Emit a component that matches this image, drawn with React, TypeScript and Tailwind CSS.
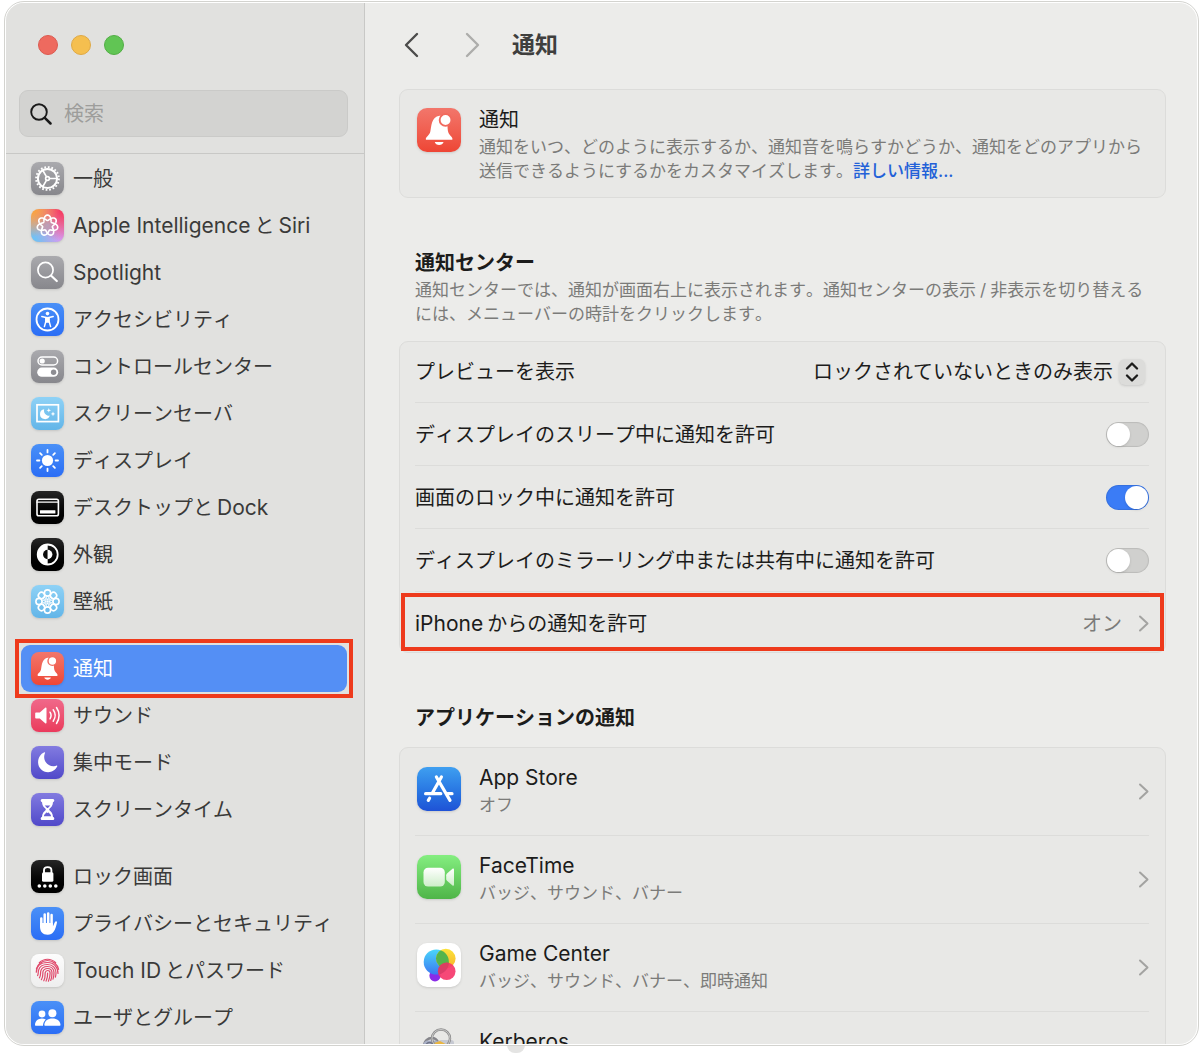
import React, { useState } from 'react';
import clsx from 'clsx';

interface SidebarItem {
  id: string;
  label: string;
  tile: string;
  glyph: React.ReactNode;
}

interface AppEntry {
  name: string;
  detail?: string;
  icon: React.ReactNode;
}

const GRAY = 'bg-linear-to-b from-[#aaaaae] to-[#87878c]';
const BLUE = 'bg-linear-to-b from-[#4a90f7] to-[#2b6df5]';
const SKY = 'bg-linear-to-b from-[#8fd2f6] to-[#62b5e8]';
const BLACK = 'bg-linear-to-b from-[#262626] to-[#000000]';
const RED = 'bg-linear-to-b from-[#f2766b] to-[#ee4534]';
const PINK = 'bg-linear-to-b from-[#f0688a] to-[#ea3a5c]';
const PURPLE = 'bg-linear-to-b from-[#837be0] to-[#5148c9]';
const WHITE = 'bg-linear-to-b from-[#fdfdfd] to-[#eeeeee]';
const SIRI =
  'bg-[radial-gradient(circle_at_50%_50%,#b9a0b8_0%,transparent_40%),radial-gradient(circle_at_0%_0%,#ffa52e_0%,transparent_60%),radial-gradient(circle_at_100%_0%,#fb2f55_0%,transparent_70%),radial-gradient(circle_at_0%_100%,#5cc8ff_0%,transparent_65%),radial-gradient(circle_at_100%_100%,#d59bff_0%,transparent_70%)] bg-[#d79fc0]';

// Seven-lobed interlaced loop
const knotPath = (() => {
  const points: string[] = [];
  for (let i = 0; i <= 280; i++) {
    const t = (i / 280) * Math.PI * 4;
    const r = 7.7 + 2.7 * Math.cos(3.5 * t);
    points.push(`${(16.5 + r * Math.sin(t)).toFixed(2)} ${(16.5 - r * Math.cos(t)).toFixed(2)}`);
  }
  return `M${points.join('L')}Z`;
})();

// Latin runs are set a step larger than the kana and kanji beside them
const Mixed: React.FC<{ text: string }> = ({ text }) => {
  const runs = text.split(/([A-Za-z][A-Za-z ]*)/).filter(Boolean);
  return (
    <span>
      {runs.map((run, i) =>
        /^[A-Za-z]/.test(run) ? (
          <span key={i} className={clsx('text-[21px] [font-kerning:normal]', i > 0 && 'ml-1', i < runs.length - 1 && 'mr-1')}>
            {run}
          </span>
        ) : (
          run
        )
      )}
    </span>
  );
};

const Glyph: React.FC<{ children: React.ReactNode }> = ({ children }) => (
  <svg
    viewBox="0 0 33 33"
    className="w-full h-full"
    fill="none"
    stroke="white"
    strokeWidth="1.8"
    strokeLinecap="round"
    strokeLinejoin="round"
    aria-hidden="true"
  >
    {children}
  </svg>
);

const GearGlyph = () => (
  <Glyph>
    <circle cx="16.5" cy="16.5" r="11.4" strokeWidth="1.9" strokeDasharray="1.79 1.79" strokeLinecap="butt" />
    <circle cx="16.5" cy="16.5" r="9.6" strokeWidth="2" />
    <circle cx="16.5" cy="16.5" r="1.9" strokeWidth="1.6" />
    <path d="M18.6 16.5H26M15.4 14.7L11.8 8.3M15.4 18.3L11.8 24.7" strokeWidth="1.7" />
  </Glyph>
);

const SearchGlyph = () => (
  <Glyph>
    <circle cx="14.5" cy="14" r="7.6" strokeWidth="1.7" />
    <path d="M20.2 19.8L25.8 25" strokeWidth="2.2" />
  </Glyph>
);

const AccessibilityGlyph = () => (
  <Glyph>
    <circle cx="16.5" cy="16.5" r="11" />
    <circle cx="16.5" cy="10.6" r="1.8" fill="white" stroke="none" />
    <path d="M10.8 13.6L15 14.6V18L13.4 23.6M22.2 13.6L18 14.6V18L19.6 23.6" strokeWidth="1.5" />
    <path d="M15 14.4h3v4.8h-3z" fill="white" strokeWidth="1" />
  </Glyph>
);

const ControlCenterGlyph = () => (
  <Glyph>
    <rect x="7" y="7" width="19.6" height="8" rx="4" strokeWidth="1.5" />
    <circle cx="11.2" cy="11" r="2.6" fill="white" stroke="none" />
    <rect x="6.2" y="17.6" width="21" height="9.2" rx="4.6" fill="white" stroke="none" />
    <circle cx="22.6" cy="22.2" r="2.7" fill="#8e8e93" stroke="none" />
  </Glyph>
);

const ScreenSaverGlyph = () => (
  <Glyph>
    <rect x="6" y="7.8" width="21.4" height="16.8" strokeWidth="1.7" strokeLinejoin="miter" />
    <path d="M13.2 12.2a5 5 0 1 0 5.6 6.4a5 5 0 0 1-5.6-6.4z" fill="white" stroke="none" />
    <path d="M17.8 11l.6 1.7 1.7.6-1.7.6-.6 1.7-.6-1.7-1.7-.6 1.7-.6zM22 14.6l.7 1.6 1.6.7-1.6.7-.7 1.6-.7-1.6-1.6-.7 1.6-.7z" fill="white" stroke="none" />
  </Glyph>
);

const DisplayGlyph = () => (
  <Glyph>
    <circle cx="16.5" cy="16.5" r="5.6" fill="white" stroke="none" />
    <path d="M16.5 6v2.4M16.5 24.6V27M6 16.5h2.4M24.6 16.5H27M9.1 9.1l1.7 1.7M22.2 22.2l1.7 1.7M9.1 23.9l1.7-1.7M22.2 10.8l1.7-1.7" />
  </Glyph>
);

const DockGlyph = () => (
  <Glyph>
    <rect x="6" y="8.2" width="21.4" height="16.6" rx="1.8" strokeWidth="1.6" />
    <path d="M6 11.2h21.4" strokeWidth="1.2" />
    <rect x="9" y="19.2" width="15.4" height="3.4" rx="0.4" fill="white" stroke="none" />
  </Glyph>
);

const AppearanceGlyph = () => (
  <Glyph>
    <circle cx="16.7" cy="16.5" r="10" strokeWidth="1.8" />
    <path d="M16.7 6.5a10 10 0 0 0 0 20z" fill="white" stroke="none" />
    <path d="M16.7 11.8a4.7 4.7 0 0 0 0 9.4z" fill="#0b0b0b" stroke="none" />
    <path d="M16.7 11.8a4.7 4.7 0 0 1 0 9.4z" fill="white" stroke="none" />
  </Glyph>
);

const WallpaperGlyph = () => (
  <Glyph>
    {[0, 45, 90, 135, 180, 225, 270, 315].map((angle) => (
      <g key={angle} transform={`rotate(${angle} 16.5 16.5)`}>
        <circle cx="16.5" cy="8" r="3.1" strokeWidth="1.6" />
        <path d="M16.5 14.4c-1.6-1-1.6-2.4 0-3.3c1.6 .9 1.6 2.3 0 3.3z" strokeWidth="0.9" />
      </g>
    ))}
    <circle cx="16.5" cy="16.5" r="1.2" fill="white" stroke="none" />
  </Glyph>
);

const BellGlyph = () => (
  <Glyph>
    <path
      d="M6.6 23.2c0-1.7 2.7-2.6 3.4-5.6c.8-3.6.6-10.9 6.9-11.8c2.2-.2 4 .8 5.2 3.2c1.2 2.5 .6 5.8 1.1 8.3c.6 3.2 3.4 4.1 3.4 5.9c0 .4-.2 .7-.8 .7H7.4c-.6 0-.8-.3-.8-.7z"
      fill="white"
      stroke="none"
    />
    <path d="M13.3 25.5h6.600c-.4 1.400-1.700 2.200-3.300 2.200s-2.900-.8-3.300-2.200z" fill="white" stroke="none" />
    <circle cx="21.4" cy="9" r="4.4" fill="white" stroke="#f16a5e" strokeWidth="1.4" />
  </Glyph>
);

const SoundGlyph = () => (
  <Glyph>
    <path d="M5 13.4h3.800l5.400-4.700c.6-.5 1.300-.2 1.300 .6v14.400c0 .8-.7 1.100-1.300 .6l-5.400-4.700H5c-.5 0-.8-.3-.8-.8v-4.600c0-.5 .3-.8 .8-.8z" fill="white" stroke="none" />
    <path d="M19 13.2c1.3 2 1.3 4.6 0 6.6M22.2 10.8c2.4 3.4 2.4 8 0 11.4M25.5 8.500c3.400 4.800 3.400 11.200 0 16" strokeWidth="1.5" />
  </Glyph>
);

const MoonGlyph = () => (
  <Glyph>
    <path d="M13.4 6.3c.5-.2 .9 .2 .6 .8c-2.900 6.400 2 13.400 8.900 13.100c1.100 0 1.900-.3 2.700-.6c.5-.2 .9 .2 .7 .7c-1.700 3.700-5.200 5.900-9.200 5.900c-5.600 0-10-4.300-10-9.900c0-4.500 2.400-8.400 6.300-10z" fill="white" stroke="none" />
  </Glyph>
);

const HourglassGlyph = () => (
  <Glyph>
    <path
      d="M11.400 6h10.200c1 0 1.700.7 1.700 1.600s-.7 1.500-1.300 1.500c0 3.600-1.900 5.300-3.300 6.500c-.7.6-.7 1.200 0 1.800c1.400 1.200 3.300 2.900 3.300 6.500c.6 0 1.300.6 1.300 1.500s-.7 1.600-1.700 1.600H11.400c-1 0-1.700-.7-1.700-1.600s.7-1.500 1.300-1.500c0-3.600 1.900-5.300 3.300-6.500c.7-.6.7-1.200 0-1.800c-1.400-1.200-3.300-2.900-3.300-6.500c-.6 0-1.300-.6-1.300-1.500S10.400 6 11.400 6z"
      fill="white"
      stroke="none"
    />
    <path d="M13.700 12.600h5.600l-2.800 3zM16.500 17.600c0 2.500-3.400 3-3.600 5.600h7.200c-.2-2.600-3.600-3.100-3.600-5.600z" fill="#6a62d4" stroke="none" />
    <path d="M16.500 15.500v4" strokeWidth="1" />
  </Glyph>
);

const LockGlyph = () => (
  <Glyph>
    <path d="M13 13v-2.700c0-4.300 7.400-4.300 7.400 0V13" strokeWidth="1.9" />
    <rect x="11" y="12.3" width="11.4" height="9.4" rx="1.5" fill="white" stroke="none" />
    {[8.3, 13.8, 19.3, 24.8].map((cx) => (
      <circle key={cx} cx={cx} cy="26" r="1.8" fill="white" stroke="none" />
    ))}
  </Glyph>
);

const HandGlyph = () => (
  <Glyph>
    <path d="M10.3 11.6v8M13.700 7.400v10M17.200 6.400v10M20.600 8v10" strokeWidth="2.5" />
    <path d="M9.050 16h12.800v3.300c1-1.500 1.400-3.200 2.100-4.400c.8-1.300 2.400-.6 2 .8c-.8 3.200-1.500 6.400-3.200 8.900c-1.500 2.200-3.400 3.200-6 3.200c-5.100 0-7.700-3.100-7.700-8z" fill="white" stroke="none" />
  </Glyph>
);

const FingerprintGlyph = () => (
  <Glyph>
    <g stroke="#e0486a" strokeWidth="1.2">
      <path d="M8.300 8.700c4.800-4.600 11.600-4.600 16.400 0" />
      <path d="M5.400 14.800c1-3.600 4.900-8.300 11.100-8.300c6 0 10.200 4.500 11.100 8.800" />
      <path d="M5.300 18.200c.2-5.800 4-9.700 11.200-9.700c6.300 0 10.600 4.600 10.500 11" />
      <path d="M6.600 21.600c1-1.800.4-3.200.9-5.200c.9-3.600 4.200-5.900 8.900-5.900c5.300 0 8.600 3.700 8.600 8.300c0 1.500-.2 2.800-.6 4.300" />
      <path d="M8.400 23.800c1.800-2.700.8-4.600 1.400-6.900c.7-2.800 3.300-4.400 6.600-4.400c4 0 6.600 2.700 6.600 6.300c0 2.300-.3 4.300-1 6.300" />
      <path d="M10.400 25.700c2.100-3.600 1.100-5.800 1.600-8c.5-2 2.300-3.200 4.500-3.200c2.700 0 4.500 1.900 4.500 4.400c0 2.800-.4 5.200-1.300 7.600" />
      <path d="M12.800 26.800c2-4 1-6.200 1.400-8.200c.3-1.300 1.100-2.100 2.400-2.100c1.500 0 2.500 1.100 2.500 2.600c0 3-.6 5.600-1.700 8.100" />
      <path d="M16.600 19c.2 3.200-.4 5.700-1.500 8.100" />
    </g>
  </Glyph>
);

const UsersGlyph = () => (
  <Glyph>
    <g fill="white" stroke="none">
      <circle cx="11" cy="13" r="3.4" />
      <path d="M4 24.100c0-3.800 3-6.600 6.900-6.600c1.500 0 2.800.4 3.900 1.100c-1.700 1.500-2.800 3.700-2.800 6.200H4.700c-.5 0-.7-.2-.7-.7z" />
      <circle cx="21.4" cy="12.3" r="4" />
      <path d="M13.300 24c0-3.900 3.400-6.600 8.100-6.600s8.100 2.700 8.100 6.600c0 .5-.3.8-.8.8H14.100c-.5 0-.8-.3-.8-.8z" />
    </g>
  </Glyph>
);

const AppStoreIcon = () => (
  <svg viewBox="0 0 44 44" className="w-full h-full" fill="none" stroke="white" strokeWidth="3.2" strokeLinecap="round" aria-hidden="true">
    <path d="M24.400 10L15.400 26M12.600 31.200L11.300 33.400M19.400 10L33 33.400" />
    <path d="M8.600 26.700H23.800M30.600 26.700H35" />
  </svg>
);

const FaceTimeIcon = () => (
  <svg viewBox="0 0 44 44" className="w-full h-full" aria-hidden="true">
    <defs>
      <linearGradient id="camera" x1="0" y1="0" x2="0" y2="1">
        <stop offset="0" stopColor="#ffffff" />
        <stop offset="1" stopColor="#cdeec9" />
      </linearGradient>
    </defs>
    <rect x="6.5" y="12.7" width="21.3" height="18.8" rx="4.6" fill="url(#camera)" />
    <path d="M29.200 20.200c0-.7.300-1.200.8-1.700l5.500-4.700c.8-.6 1.500-.3 1.500.7v15.200c0 1-.7 1.300-1.500.7L30 25.700c-.5-.5-.8-1-.8-1.700z" fill="url(#camera)" />
  </svg>
);

const GameCenterIcon = () => (
  <svg viewBox="0 0 44 44" className="w-full h-full" aria-hidden="true">
    <defs>
      <linearGradient id="bubbleBlue" x1="0" y1="0" x2="0" y2="1">
        <stop offset="0" stopColor="#4ad6fb" />
        <stop offset="1" stopColor="#3b78f2" />
      </linearGradient>
      <linearGradient id="bubbleYellow" x1="0" y1="0" x2="0" y2="1">
        <stop offset="0" stopColor="#fbe33a" />
        <stop offset="1" stopColor="#f7b32c" />
      </linearGradient>
      <clipPath id="blueClip">
        <circle cx="19.3" cy="19" r="12.6" />
      </clipPath>
    </defs>
    <circle cx="18" cy="32.8" r="5.6" fill="#8a2be8" />
    <circle cx="19.3" cy="19" r="12.6" fill="url(#bubbleBlue)" />
    <circle cx="28.8" cy="15.6" r="9.8" fill="url(#bubbleYellow)" />
    <circle cx="28.8" cy="15.6" r="9.8" fill="#55b44c" clipPath="url(#blueClip)" />
    <circle cx="29.7" cy="28.2" r="8.8" fill="#f5386b" fillOpacity="0.92" />
    <circle cx="29.7" cy="28.2" r="8.8" fill="#d23a5a" fillOpacity="0.5" clipPath="url(#blueClip)" />
  </svg>
);

const KerberosIcon = () => (
  <svg viewBox="0 0 44 44" className="w-full h-full overflow-visible" fill="none" aria-hidden="true">
    <path d="M7 15c0-5 4-8 8-8s5 2 6 4" stroke="#85858a" strokeWidth="2.6" />
    <rect x="6" y="9.5" width="17" height="26" rx="5" fill="#a9b0c6" />
    <rect x="21" y="9" width="16" height="28" rx="3" fill="#c6c9d2" />
    <circle cx="24" cy="7.5" r="9" stroke="#8b8b8b" strokeWidth="2.4" />
    <circle cx="24" cy="7.5" r="9" stroke="#cfcfcf" strokeWidth="0.9" />
    <path d="M17 12l6-2 13 7v5l-8-3z" fill="#eab640" />
    <circle cx="12.5" cy="15" r="3.5" stroke="#6f7488" strokeWidth="1.5" />
  </svg>
);

const SIDEBAR_GROUPS: SidebarItem[][] = [
  [
    { id: 'general', label: '一般', tile: GRAY, glyph: <GearGlyph /> },
    { id: 'siri', label: 'Apple IntelligenceとSiri', tile: SIRI, glyph: <Glyph><path d={knotPath} strokeWidth="1.6" /></Glyph> },
    { id: 'spotlight', label: 'Spotlight', tile: GRAY, glyph: <SearchGlyph /> },
    { id: 'accessibility', label: 'アクセシビリティ', tile: BLUE, glyph: <AccessibilityGlyph /> },
    { id: 'control-center', label: 'コントロールセンター', tile: GRAY, glyph: <ControlCenterGlyph /> },
    { id: 'screen-saver', label: 'スクリーンセーバ', tile: SKY, glyph: <ScreenSaverGlyph /> },
    { id: 'display', label: 'ディスプレイ', tile: BLUE, glyph: <DisplayGlyph /> },
    { id: 'dock', label: 'デスクトップとDock', tile: BLACK, glyph: <DockGlyph /> },
    { id: 'appearance', label: '外観', tile: BLACK, glyph: <AppearanceGlyph /> },
    { id: 'wallpaper', label: '壁紙', tile: SKY, glyph: <WallpaperGlyph /> },
  ],
  [
    { id: 'notifications', label: '通知', tile: RED, glyph: <BellGlyph /> },
    { id: 'sound', label: 'サウンド', tile: PINK, glyph: <SoundGlyph /> },
    { id: 'focus', label: '集中モード', tile: PURPLE, glyph: <MoonGlyph /> },
    { id: 'screen-time', label: 'スクリーンタイム', tile: PURPLE, glyph: <HourglassGlyph /> },
  ],
  [
    { id: 'lock-screen', label: 'ロック画面', tile: BLACK, glyph: <LockGlyph /> },
    { id: 'privacy', label: 'プライバシーとセキュリティ', tile: BLUE, glyph: <HandGlyph /> },
    { id: 'touch-id', label: 'Touch IDとパスワード', tile: WHITE, glyph: <FingerprintGlyph /> },
    { id: 'users', label: 'ユーザとグループ', tile: BLUE, glyph: <UsersGlyph /> },
  ],
];

const APPS: AppEntry[] = [
  {
    name: 'App Store',
    detail: 'オフ',
    icon: <div className="w-11 h-11 rounded-[10px] bg-linear-to-b from-[#3f9ff0] to-[#1f52d6] shadow-sm"><AppStoreIcon /></div>,
  },
  {
    name: 'FaceTime',
    detail: 'バッジ、サウンド、バナー',
    icon: <div className="w-11 h-11 rounded-[10px] bg-linear-to-b from-[#84ee80] to-[#4fb548] shadow-sm"><FaceTimeIcon /></div>,
  },
  {
    name: 'Game Center',
    detail: 'バッジ、サウンド、バナー、即時通知',
    icon: <div className="w-11 h-11 rounded-[10px] bg-white shadow-sm"><GameCenterIcon /></div>,
  },
  {
    name: 'Kerberos',
    icon: <div className="w-11 h-11"><KerberosIcon /></div>,
  },
];

const Disclosure = () => (
  <svg viewBox="0 0 11 17" className="w-[11px] h-[17px] shrink-0" fill="none" stroke="#a3a3a1" strokeWidth="2" strokeLinecap="round" strokeLinejoin="round" aria-hidden="true">
    <path d="M2 1.500L9.500 8.500L2 15.500" />
  </svg>
);

const Toggle: React.FC<{ id: string; label: string; defaultChecked?: boolean }> = ({ id, label, defaultChecked }) => {
  const [checked, setChecked] = useState(!!defaultChecked);
  return (
    <div className="ml-[15px] mr-4 h-[63px] pt-px border-b border-[#dcdcda] flex items-center justify-between">
      <label htmlFor={id}>{label}</label>
      <input
        id={id}
        type="checkbox"
        checked={checked}
        onChange={(e) => setChecked(e.target.checked)}
        className="appearance-none w-[43px] h-[25px] rounded-full p-px bg-[#d0d0ce] shadow-[inset_0_0_1px_1px_rgba(0,0,0,0.1)] checked:bg-[#3b7cf6] before:block before:w-[23px] before:h-[23px] before:rounded-full before:bg-white before:shadow checked:before:ml-[18px]"
      />
    </div>
  );
};

export default function App() {
  const [active, setActive] = useState('notifications');

  return (
    <div className="relative h-screen bg-white pt-px pb-[9px] pl-1 pr-px font-['Inter','Noto_Sans_CJK_JP',sans-serif] [font-kerning:none] text-[20px] leading-6 text-[#1c1c1b]">
      {/* Pointer showing below the window edge */}
      <div className="absolute left-[507px] bottom-[2px] w-[18px] h-4 rounded-full bg-[#e4e4e3]" />

      <div className="relative h-full bg-white border border-[#d3d3cf] rounded-[20px] p-px">
        <div className="flex h-full rounded-[18px] overflow-hidden bg-[#ececea]">
          {/* Sidebar */}
          <nav className="w-[359px] shrink-0 bg-[#e1e1df] border-r border-[#c8c8c6] text-[#3a3a39]">
            <div className="pt-8 pb-4 border-b border-[#c8c8c6]">
              <div className="flex gap-[13px] pl-8">
                <button aria-label="閉じる" className="w-5 h-5 rounded-full bg-[#ee6a5f] border border-[#dc5a50]" />
                <button aria-label="しまう" className="w-5 h-5 rounded-full bg-[#f5bf4f] border border-[#dfa945]" />
                <button aria-label="拡大" className="w-5 h-5 rounded-full bg-[#61c554] border border-[#52ae45]" />
              </div>
              <div className="mt-[35px] ml-[13px] mr-4 h-[47px] rounded-[9px] bg-[#d3d3d1] border border-[#cacac8] flex items-center pl-[10px] gap-3">
                <svg viewBox="0 0 22 22" className="w-[22px] h-[22px] shrink-0" fill="none" stroke="#1a1a1a" strokeLinecap="round" aria-hidden="true">
                  <circle cx="9" cy="9" r="7.8" strokeWidth="1.9" />
                  <path d="M14.800 14.800L20.500 20.500" strokeWidth="2.5" />
                </svg>
                <input type="text" aria-label="検索" placeholder="検索" className="flex-1 min-w-0 bg-transparent outline-none placeholder:text-[#9d9d9b]" />
              </div>
            </div>

            <div className="pt-px pl-[15px] pr-[17px] flex flex-col gap-5">
              {SIDEBAR_GROUPS.map((group, index) => (
                <ul key={index}>
                  {group.map((item) => (
                    <li key={item.id} className={clsx(item.id === 'notifications' && 'outline-4 outline-offset-2 outline-[#ee3a1c]')}>
                      <button
                        onClick={() => setActive(item.id)}
                        className={clsx(
                          'w-full h-[47px] pl-[10px] flex items-center gap-[9px] rounded-[9px] whitespace-nowrap',
                          item.id === active && 'bg-[#548ff5] text-white'
                        )}
                      >
                        <span className={clsx('w-[33px] h-[33px] shrink-0 rounded-[8px] shadow-sm', item.tile)}>{item.glyph}</span>
                        <Mixed text={item.label} />
                      </button>
                    </li>
                  ))}
                </ul>
              ))}
            </div>
          </nav>

          {/* Detail pane */}
          <main className="flex-1 min-w-0 overflow-hidden pl-[34px] pr-[31px]">
            <header className="h-[83px] mb-[3px] pl-1 flex items-center">
              <button aria-label="戻る" className="w-[18px]">
                <svg viewBox="0 0 18 26" className="w-[18px] h-[26px]" fill="none" stroke="#4c4c4b" strokeWidth="2.4" strokeLinecap="round" strokeLinejoin="round">
                  <path d="M14 2L3 13L14 24" />
                </svg>
              </button>
              <button aria-label="進む" className="w-[18px] ml-[43px]">
                <svg viewBox="0 0 18 26" className="w-[18px] h-[26px]" fill="none" stroke="#adadab" strokeWidth="2.4" strokeLinecap="round" strokeLinejoin="round">
                  <path d="M3 2L14 13L3 24" />
                </svg>
              </button>
              <h1 className="ml-[30px] text-[23px] font-bold text-[#3f3f3e]">通知</h1>
            </header>

            <section className="border border-[#dcdcda] rounded-[9px] bg-[#e8e8e6] pt-[18px] pb-[14px] px-[17px] flex gap-[18px]">
              <div className={clsx('w-11 h-11 shrink-0 rounded-[10px] shadow-sm', RED)}>
                <BellGlyph />
              </div>
              <div>
                <h2>通知</h2>
                <p className="mt-[3px] text-[17px] text-[#7b7b79]">
                  通知をいつ、どのように表示するか、通知音を鳴らすかどうか、通知をどのアプリから送信できるようにするかをカスタマイズします。<a href="#more" className="text-[#2361d8] font-medium">詳しい情報...</a>
                </p>
              </div>
            </section>

            <div className="mt-[53px] px-4">
              <h2 className="font-bold">通知センター</h2>
              <p className="mt-[3px] text-[17px] text-[#7b7b79]">
                通知センターでは、通知が画面右上に表示されます。通知センターの表示<span className="mx-1">/</span>非表示を切り替えるには、メニューバーの時計をクリックします。
              </p>
            </div>

            <section className="mt-[15px] border border-[#dcdcda] rounded-[9px] bg-[#e8e8e6]">
              <div className="ml-[15px] mr-4 h-[61px] border-b border-[#dcdcda] flex items-center justify-between">
                <label htmlFor="preview">プレビューを表示</label>
                <div className="relative flex items-center">
                  <select id="preview" className="appearance-none bg-transparent pr-9 outline-none">
                    <option>ロックされていないときのみ表示</option>
                    <option>常に表示</option>
                    <option>表示しない</option>
                  </select>
                  <div className="absolute right-1 w-[26px] h-[26px] rounded-[6px] bg-[#dcdcda] shadow-sm pointer-events-none flex items-center justify-center">
                    <svg viewBox="0 0 14 20" className="w-[14px] h-5" fill="none" stroke="#1c1c1b" strokeWidth="2.3" strokeLinecap="round" strokeLinejoin="round" aria-hidden="true">
                      <path d="M2 6.500L7 1.500L12 6.500M2 13.500L7 18.500L12 13.500" />
                    </svg>
                  </div>
                </div>
              </div>
              <Toggle id="sleep" label="ディスプレイのスリープ中に通知を許可" />
              <Toggle id="locked" label="画面のロック中に通知を許可" defaultChecked />
              <Toggle id="mirroring" label="ディスプレイのミラーリング中または共有中に通知を許可" />
              <button className="w-full h-[60px] pt-[3px] pl-[15px] pr-4 flex items-center text-left outline-4 -outline-offset-5 outline-[#ee3a1c]">
                <span className="flex-1"><Mixed text="iPhoneからの通知を許可" /></span>
                <span className="mr-4 text-[#7b7b79]">オン</span>
                <Disclosure />
              </button>
            </section>

            <h2 className="mt-[53px] px-4 font-bold">アプリケーションの通知</h2>

            <section className="mt-[17px] border border-[#dcdcda] rounded-[9px] bg-[#e8e8e6]">
              {APPS.map((app) => (
                <button key={app.name} className="block w-full pl-[15px] pr-4 text-left">
                  <div className="h-[88px] border-b border-[#dcdcda] pl-[2px] flex items-center">
                    <div className="self-start mt-[19px] shrink-0">{app.icon}</div>
                    <div className="self-start mt-[18px] ml-[18px] flex-1">
                      <div><Mixed text={app.name} /></div>
                      {app.detail && <div className="mt-[3px] text-[17px] text-[#7b7b79]">{app.detail}</div>}
                    </div>
                    <Disclosure />
                  </div>
                </button>
              ))}
            </section>
          </main>
        </div>
      </div>
    </div>
  );
}
